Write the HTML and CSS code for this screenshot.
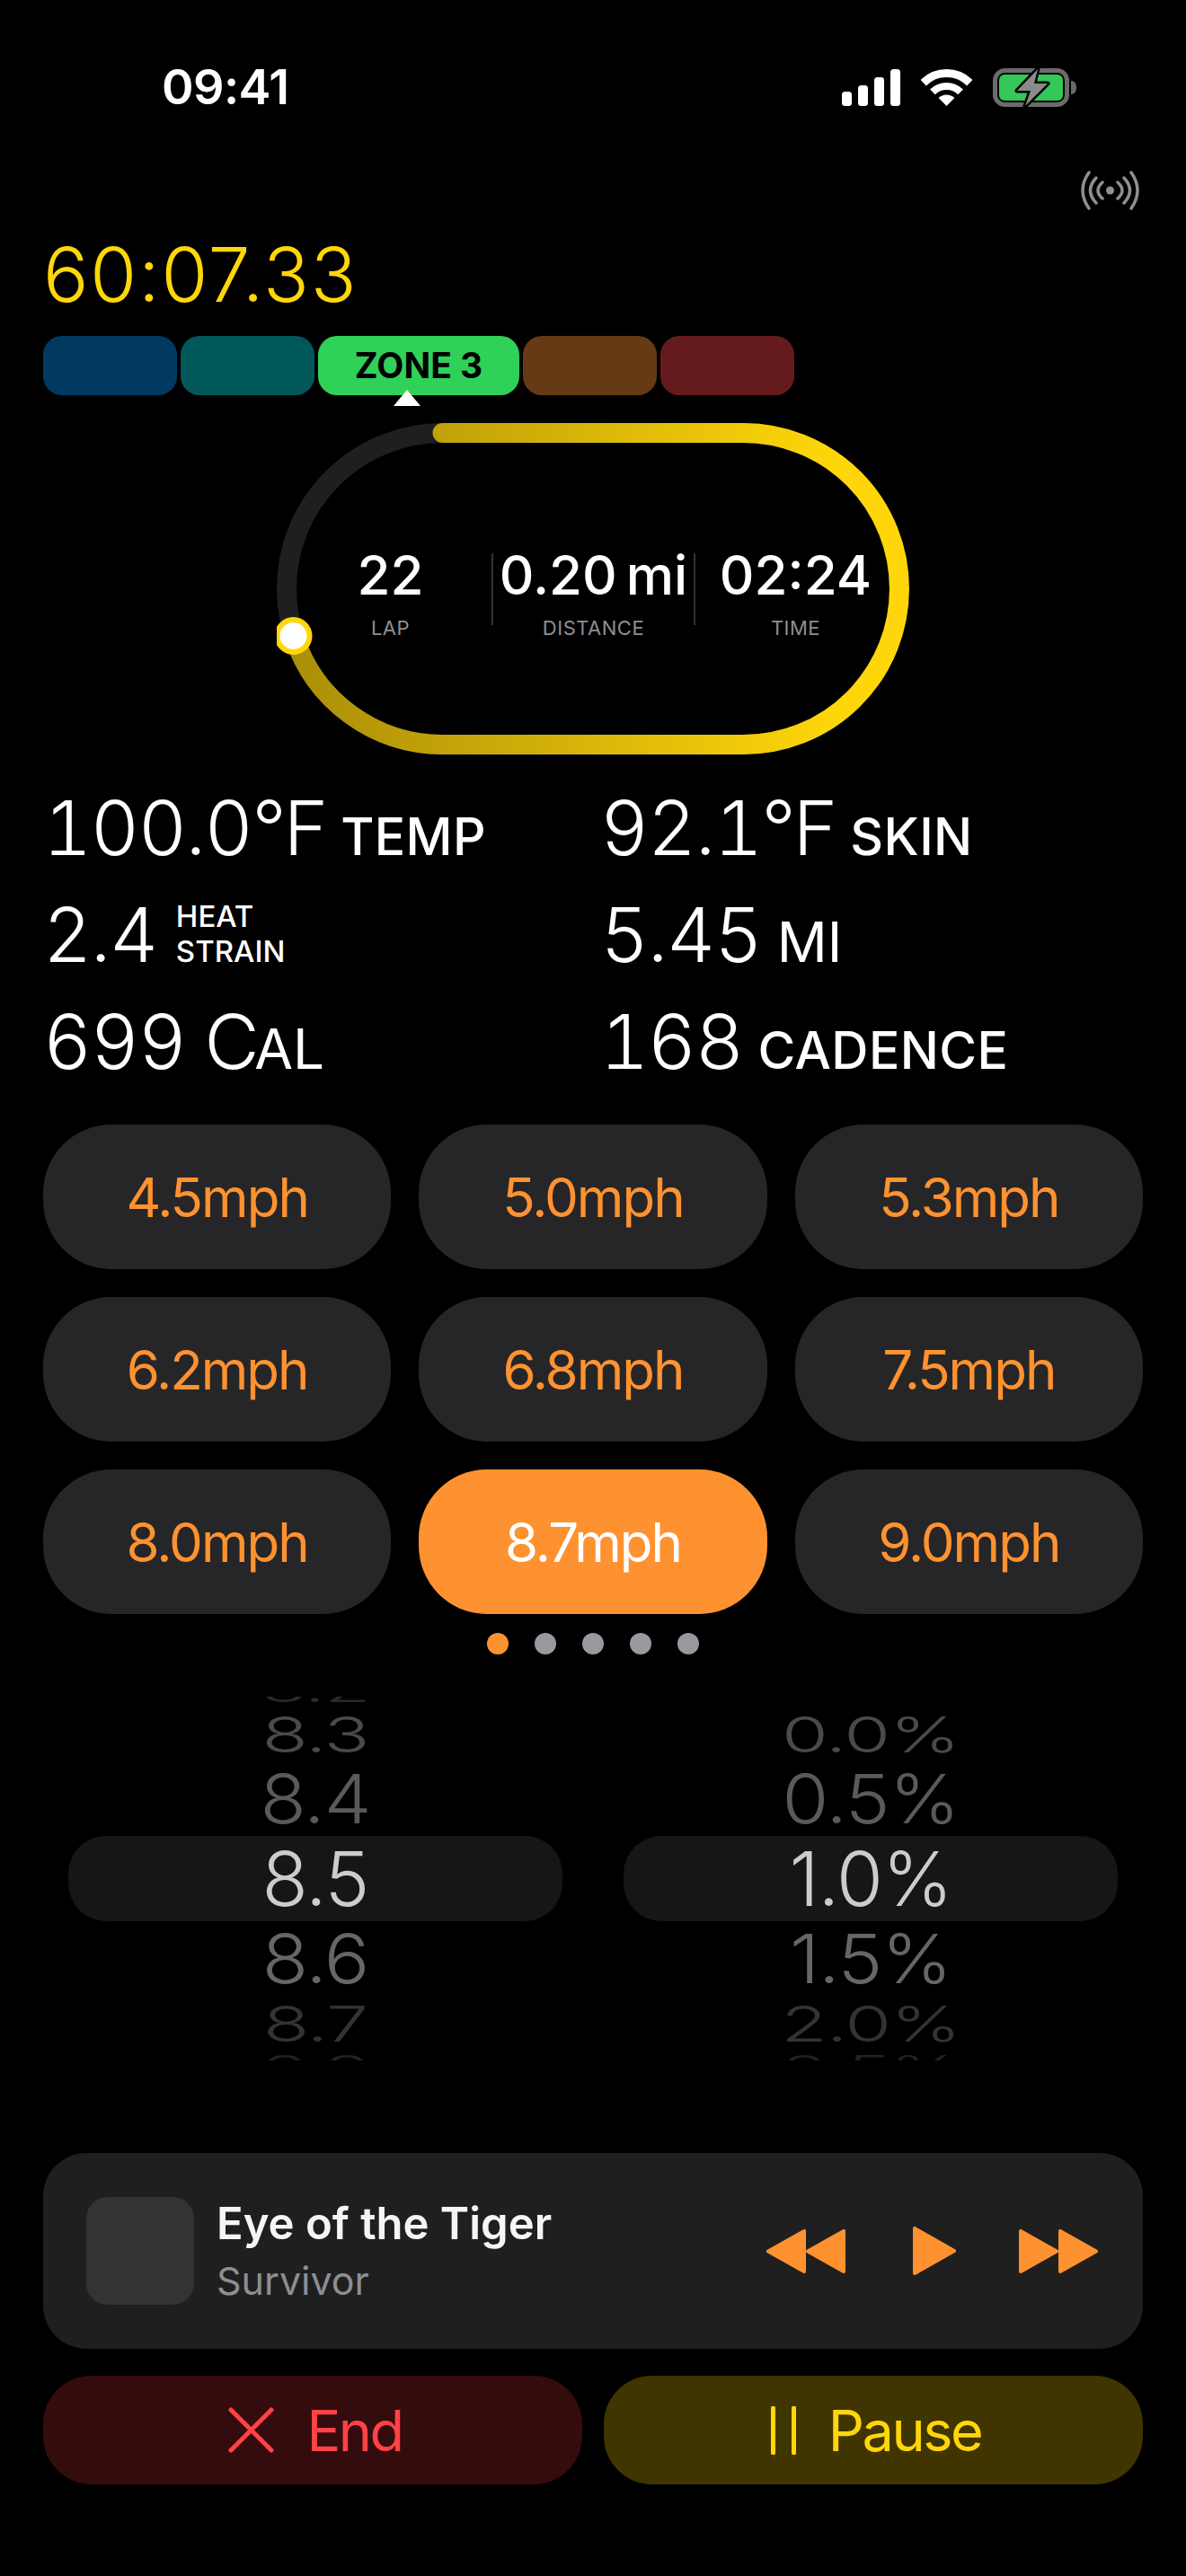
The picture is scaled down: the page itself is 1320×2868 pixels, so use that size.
FILE: index.html
```html
<!DOCTYPE html>
<html lang="en">
<head>
<meta charset="utf-8">
<title>Workout</title>
<link rel="stylesheet" href="styles.css">
</head>
<body>
<main class="screen">
  <header class="status">
    <span class="clock">09:41</span>
    <div class="status-icons">
      <svg class="signal" width="65" height="41" viewBox="0 0 65 41"><rect x="0" y="25" width="11" height="16" rx="3.5"/><rect x="18" y="18" width="11" height="23" rx="3.5"/><rect x="36" y="9" width="11" height="32" rx="3.5"/><rect x="54" y="0" width="11" height="41" rx="3.5"/></svg>
      <svg class="wifi" width="57" height="41" viewBox="0 0 57 41"><path class="wifi-arc w9" d="M2.7 15.2A36.5 36.5 0 0 1 54.3 15.2"/><path class="wifi-arc w8" d="M12.9 25.4A22 22 0 0 1 44.1 25.4"/><path class="wifi-dot" d="M28.5 41L19.6 32.1A12.6 12.6 0 0 1 37.4 32.1Z"/></svg>
      <svg class="battery" width="93" height="45" viewBox="0 0 93 45"><rect class="bat-shell" x="2.5" y="3.5" width="80" height="38" rx="11"/><rect class="bat-fill" x="7" y="8" width="71" height="29" rx="6"/><path class="bat-nub" d="M87 15C91 15 93 18 93 22.5C93 27 91 30 87 30Z"/><path class="bat-bolt" d="M50 2L27 26H42L36 43L61 18H46Z"/></svg>
    </div>
  </header>

  <div class="signal-row">
    <svg class="antenna" width="65" height="44" viewBox="0 0 65 44"><circle cx="32.5" cy="22" r="4.5"/><path d="M9 2Q-5 22 9 42M17 8Q4 22 17 36M24 13Q14 22 24 31M56 2Q70 22 56 42M48 8Q61 22 48 36M41 13Q51 22 41 31"/></svg>
  </div>

  <div class="timer">60:07.33</div>

  <div class="zones">
    <div class="zone z1"></div>
    <div class="zone z2"></div>
    <div class="zone z3">ZONE 3<span class="pointer"></span></div>
    <div class="zone z4"></div>
    <div class="zone z5"></div>
  </div>

  <section class="ring">
    <svg width="704" height="369" viewBox="0 0 704 369">
      <defs><linearGradient id="lap" gradientUnits="userSpaceOnUse" x1="0" y1="0" x2="620" y2="0"><stop offset="0" stop-color="#a88c08"/><stop offset="1" stop-color="#ffd60a"/></linearGradient></defs>
      <rect class="ring-track" x="11" y="11" width="682" height="347" rx="173.5"/>
      <path class="ring-lap" d="M184.5 11H519.5A173.5 173.5 0 0 1 519.5 358H184.5A173.5 173.5 0 0 1 19 236.7"/>
      <circle class="ring-dot" cx="18.5" cy="237" r="18"/>
    </svg>
    <div class="lap-metrics">
      <div class="metric"><div class="metric-value">22</div><div class="metric-label">LAP</div></div>
      <div class="metric"><div class="metric-value">0.20 mi</div><div class="metric-label">DISTANCE</div></div>
      <div class="metric"><div class="metric-value">02:24</div><div class="metric-label">TIME</div></div>
    </div>
  </section>

  <section class="stats">
    <div class="stat">100.0<span class="deg">°F</span> <span class="unit">TEMP</span></div>
    <div class="stat">92.1<span class="deg">°F</span> <span class="unit">SKIN</span></div>
    <div class="stat">2.4 <span class="unit-stack">HEAT<br>STRAIN</span></div>
    <div class="stat">5.45 <span class="unit thin">MI</span></div>
    <div class="stat">699 C<span class="unit thin">AL</span></div>
    <div class="stat">168 <span class="unit">CADENCE</span></div>
  </section>

  <section class="speeds">
    <div class="speed">4.5mph</div>
    <div class="speed">5.0mph</div>
    <div class="speed">5.3mph</div>
    <div class="speed">6.2mph</div>
    <div class="speed">6.8mph</div>
    <div class="speed">7.5mph</div>
    <div class="speed">8.0mph</div>
    <div class="speed active">8.7mph</div>
    <div class="speed">9.0mph</div>
  </section>

  <div class="dots"><i class="dot on"></i><i class="dot"></i><i class="dot"></i><i class="dot"></i><i class="dot"></i></div>

  <section class="pickers">
    <div class="wheel">
      <div class="wheel-pill"></div>
      <div class="wheel-item o3">8.2</div>
      <div class="wheel-item o2">8.3</div>
      <div class="wheel-item o1">8.4</div>
      <div class="wheel-item o0">8.5</div>
      <div class="wheel-item u1">8.6</div>
      <div class="wheel-item u2">8.7</div>
      <div class="wheel-item u3">8.8</div>
    </div>
    <div class="wheel">
      <div class="wheel-pill"></div>
      <div class="wheel-item o3"></div>
      <div class="wheel-item o2">0.0%</div>
      <div class="wheel-item o1">0.5%</div>
      <div class="wheel-item o0">1.0%</div>
      <div class="wheel-item u1">1.5%</div>
      <div class="wheel-item u2">2.0%</div>
      <div class="wheel-item u3">2.5%</div>
    </div>
  </section>

  <section class="player">
    <div class="art"></div>
    <div class="track">
      <div class="title">Eye of the Tiger</div>
      <div class="artist">Survivor</div>
    </div>
    <div class="transport">
      <svg class="rewind" width="88" height="49" viewBox="0 0 88 49"><path d="M86 2V47L46 24.5ZM42 2V47L2 24.5Z"/></svg>
      <svg width="48" height="54" viewBox="0 0 48 54"><path d="M2 2V52L46 27Z"/></svg>
      <svg width="88" height="49" viewBox="0 0 88 49"><path d="M2 2V47L42 24.5ZM46 2V47L86 24.5Z"/></svg>
    </div>
  </section>

  <section class="actions">
    <div class="action end">
      <svg width="51" height="51" viewBox="0 0 51 51"><path d="M3 3L48 48M48 3L3 48"/></svg>
      <span>End</span>
    </div>
    <div class="action pause">
      <svg width="28" height="54" viewBox="0 0 28 54"><path d="M2.5 2V52M25.5 2V52"/></svg>
      <span>Pause</span>
    </div>
  </section>
</main>
</body>
</html>
```
FILE: styles.css
```css
* { box-sizing: border-box; }
html, body { margin: 0; background: #000; }
.screen {
  width: 1320px;
  height: 2868px;
  overflow: hidden;
  padding: 71px 48px 0;
  background: #000;
  color: #fff;
  font-family: Inter, "Noto Sans", sans-serif;
}

/* status bar */
.status { display: flex; justify-content: space-between; align-items: center; height: 52px; padding: 0 74px 0 132px; }
.clock { font-size: 54px; font-weight: 600; letter-spacing: -.6px; line-height: 52px; }
.status-icons { display: flex; align-items: center; gap: 23px; }
.signal { fill: #fff; }
.wifi-arc { fill: none; stroke: #fff; }
.w9 { stroke-width: 9; }
.w8 { stroke-width: 8; }
.wifi-dot { fill: #fff; }
.bat-shell { fill: none; stroke: #6b6b6b; stroke-width: 5; }
.bat-fill { fill: #34c759; }
.bat-nub { fill: #6b6b6b; }
.bat-bolt { fill: #8a8a8a; stroke: #000; stroke-width: 5; stroke-linejoin: round; paint-order: stroke; }

.signal-row { display: flex; justify-content: flex-end; margin-top: 67px; padding-right: 4px; height: 44px; }
.antenna { fill: #8e8e93; }
.antenna path { fill: none; stroke: #8e8e93; stroke-width: 3.5; stroke-linecap: round; }

.timer { margin-top: 30px; height: 84px; line-height: 84px; font-size: 84px; color: #ffd60a; font-weight: 350; letter-spacing: 1.8px; }

/* zones */
.zones { display: flex; gap: 4px; margin-top: 26px; height: 66px; }
.zone { width: 149px; border-radius: 21px; }
.z1 { background: #003a63; }
.z2 { background: #00585a; }
.z3 { position: relative; width: 224px; background: #30d158; color: #000; font-size: 39px; font-weight: 700; line-height: 66px; text-align: center; }
.z4 { background: #653a14; }
.z5 { background: #651b1d; }
.pointer { position: absolute; left: 84px; top: 60px; width: 0; height: 0; border-left: 15px solid transparent; border-right: 15px solid transparent; border-bottom: 18px solid #fff; }

/* ring */
.ring { position: relative; width: 704px; height: 369px; margin: 31px auto 0; }
.ring svg { display: block; }
.ring-track { fill: none; stroke: #1f1f1f; stroke-width: 22; }
.ring-lap { fill: none; stroke: url(#lap); stroke-width: 22; stroke-linecap: round; }
.ring-dot { fill: #fff; stroke: #ffd60a; stroke-width: 6; }
.lap-metrics { position: absolute; left: 14px; top: 145px; width: 675px; display: flex; }
.metric { width: 225px; height: 80px; text-align: center; }
.metric + .metric { border-left: 2px solid #333; }
.metric-value { font-size: 60px; font-weight: 500; line-height: 48px; white-space: nowrap; word-spacing: -6px; }
.metric-label { font-size: 22px; letter-spacing: .5px; color: #8e8e93; line-height: 24px; margin-top: 23px; }

/* stats */
.stats { display: grid; grid-template-columns: 604px 604px; column-gap: 16px; grid-auto-rows: 119px; margin-top: 22px; }
.stat { font-size: 84px; line-height: 119px; height: 119px; font-weight: 300; white-space: nowrap; font-feature-settings: "tnum"; letter-spacing: -1.5px; }
.deg { letter-spacing: -3px; }
.unit { font-size: 57px; font-weight: 500; letter-spacing: .4px; margin-left: -4px; }
.unit.thin { font-weight: 400; font-size: 62px; letter-spacing: 0; }
.unit-stack { display: inline-block; font-size: 33px; line-height: 39px; font-weight: 500; letter-spacing: 0; text-align: left; }

/* speeds */
.speeds { display: grid; grid-template-columns: repeat(3, 1fr); gap: 31px; grid-auto-rows: 161px; margin-top: 33px; }
.speed { display: flex; align-items: center; justify-content: center; background: #262628; border-radius: 76px; color: #ff9230; font-size: 60px; letter-spacing: -2px; }
.speed.active { background: #ff9230; color: #fff; }

.dots { display: flex; justify-content: center; gap: 29px; margin-top: 21px; }
.dot { width: 24px; height: 24px; border-radius: 50%; background: #98989e; }
.dot.on { background: #ff9230; }

/* pickers */
.pickers { display: flex; justify-content: space-between; padding: 0 28px; margin-top: 47px; }
.wheel { position: relative; width: 550px; height: 405px; overflow: hidden; display: flex; flex-direction: column; align-items: center; justify-content: center; font-size: 84px; font-weight: 350; letter-spacing: -1px; }
.wheel-pill { position: absolute; left: 0; right: 0; top: 155px; height: 95px; background: #161618; border-radius: 42px; }
.wheel-item { position: relative; flex: none; text-align: center; }
.o0 { height: 96px; line-height: 96px; color: #ccc; }
.o1, .u1 { height: 82px; line-height: 82px; transform: scaleY(.9); color: #5a5a5a; }
.o2, .u2 { height: 62px; line-height: 62px; transform: scaleY(.66); }
.o3, .u3 { height: 40px; line-height: 40px; transform: scaleY(.5); }
.o2 { color: #4a4a4a; }
.u1 { color: #666; }
.u2 { color: #333; }
.o3 { color: #2a2a2a; }
.u3 { color: #222; }

/* player */
.player { display: flex; align-items: center; height: 218px; margin-top: 103px; padding: 0 50px 0 48px; background: #1f1f1f; border-radius: 48px; }
.art { width: 120px; height: 120px; flex: none; border-radius: 24px; background: #333; }
.track { margin-left: 25px; flex: 1; }
.title { font-size: 49px; font-weight: 600; line-height: 60px; color: #f5f5f5; }
.artist { font-size: 43px; line-height: 54px; color: #8e8e93; margin-top: 6px; }
.transport { display: flex; align-items: center; gap: 70px; }
.rewind { margin-right: 5px; }
.transport svg { fill: #ff9230; stroke: #ff9230; stroke-width: 4; stroke-linejoin: round; }

/* actions */
.actions { display: flex; gap: 24px; margin-top: 30px; }
.action { flex: 1; height: 121px; display: flex; align-items: center; justify-content: center; gap: 36px; padding-left: 6px; border-radius: 54px; font-size: 63px; letter-spacing: -2.5px; }
.action svg { fill: none; stroke: currentColor; stroke-width: 5; stroke-linecap: round; }
.end { background: #340c0e; color: #ff4245; }
.pause { background: #403500; color: #ffd60a; }
```
